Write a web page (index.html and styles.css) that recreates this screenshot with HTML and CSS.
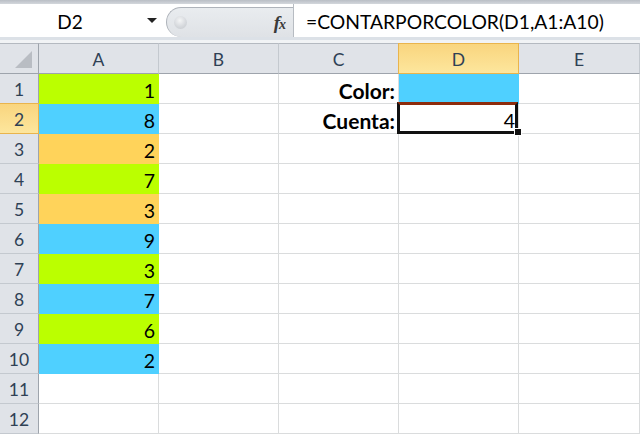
FILE: index.html
```html
<!DOCTYPE html>
<html>
<head>
<meta charset="utf-8">
<link rel="stylesheet" href="styles.css">
</head>
<body>
<div class="app">
  <div class="topstrip"></div>
  <div class="fbar">
    <div class="namebox">
      <span class="ref">D2</span>
      <span class="arrow"></span>
    </div>
    <div class="mid">
      <div class="pill">
        <span class="knob"></span>
        <span class="fx"><i>f</i><i class="x">x</i></span>
      </div>
    </div>
    <div class="formula">=CONTARPORCOLOR(D1,A1:A10)</div>
  </div>
  <div class="under"></div>
  <div class="sheet">
    <div class="hd corner"><span class="tri"></span></div>
    <div class="hd col">A</div>
    <div class="hd col">B</div>
    <div class="hd col">C</div>
    <div class="hd col sel">D</div>
    <div class="hd col">E</div>

    <div class="hd row">1</div>
    <div class="c lime">1</div><div class="c"></div><div class="c b">Color:</div><div class="c blue"></div><div class="c"></div>

    <div class="hd row sel">2</div>
    <div class="c blue">8</div><div class="c"></div><div class="c b">Cuenta:</div><div class="c active">4<span class="selbox"></span><span class="handle"></span></div><div class="c"></div>

    <div class="hd row">3</div>
    <div class="c orange">2</div><div class="c"></div><div class="c"></div><div class="c"></div><div class="c"></div>

    <div class="hd row">4</div>
    <div class="c lime">7</div><div class="c"></div><div class="c"></div><div class="c"></div><div class="c"></div>

    <div class="hd row">5</div>
    <div class="c orange">3</div><div class="c"></div><div class="c"></div><div class="c"></div><div class="c"></div>

    <div class="hd row">6</div>
    <div class="c blue">9</div><div class="c"></div><div class="c"></div><div class="c"></div><div class="c"></div>

    <div class="hd row">7</div>
    <div class="c lime">3</div><div class="c"></div><div class="c"></div><div class="c"></div><div class="c"></div>

    <div class="hd row">8</div>
    <div class="c blue">7</div><div class="c"></div><div class="c"></div><div class="c"></div><div class="c"></div>

    <div class="hd row">9</div>
    <div class="c lime">6</div><div class="c"></div><div class="c"></div><div class="c"></div><div class="c"></div>

    <div class="hd row">10</div>
    <div class="c blue">2</div><div class="c"></div><div class="c"></div><div class="c"></div><div class="c"></div>

    <div class="hd row">11</div>
    <div class="c"></div><div class="c"></div><div class="c"></div><div class="c"></div><div class="c"></div>

    <div class="hd row">12</div>
    <div class="c"></div><div class="c"></div><div class="c"></div><div class="c"></div><div class="c"></div>
  </div>
</div>
</body>
</html>
```

FILE: styles.css
```css
* { box-sizing: border-box; }
html, body { margin: 0; padding: 0; background: #fff; }
body { width: 640px; height: 436px; overflow: hidden; font-family: Lato, "Liberation Sans", sans-serif; }

.app { display: flex; flex-direction: column; }

.topstrip {
  height: 4px;
  background: linear-gradient(#b9bec5, #d3d7dc);
}

.fbar {
  height: 33px;
  display: flex;
  background: #fff;
}

.namebox {
  width: 166px;
  display: flex;
  align-items: center;
  background: #fff;
}
.ref {
  width: 140px;
  text-align: center;
  font-size: 19px;
  color: #000;
  padding-top: 1px;
}
.arrow {
  width: 0; height: 0;
  margin-left: 7px;
  border-left: 5px solid transparent;
  border-right: 5px solid transparent;
  border-top: 5px solid #222;
}

.mid {
  width: 127px;
  background: #fff;
  padding-top: 3px;
}
.pill {
  height: 100%;
  display: flex;
  align-items: center;
  background: linear-gradient(#e9ecef, #dfe2e6);
  border: 1px solid #aeb3ba;
  border-right: none;
  border-bottom: none;
  border-radius: 15px 0 0 15px;
  padding-left: 7px;
}
.knob {
  width: 13px; height: 13px;
  border-radius: 50%;
  background: radial-gradient(circle at 45% 35%, #f4f5f6 0%, #d6d9dd 55%, #c2c6cb 100%);
}
.fx {
  margin-left: auto;
  margin-right: 8px;
  font-family: "Liberation Serif", serif;
  font-weight: bold;
  font-size: 19px;
  color: #3a3a3a;
  letter-spacing: -1px;
}
.fx .x { font-size: 14px; }

.formula {
  flex: 1;
  border-left: 1px solid #b7bcc2;
  padding-left: 12px;
  display: flex;
  align-items: center;
  font-size: 19.3px;
  color: #000;
  white-space: nowrap;
  padding-top: 1px;
}

.under {
  height: 6px;
  background: linear-gradient(#dce1e7 0, #dce1e7 3px, #f1f3f5 3px, #f1f3f5 6px);
}

.sheet {
  display: grid;
  grid-template-columns: 39px 120px 120px 120px 120px 1fr;
  grid-template-rows: 31px repeat(12, 30px);
}

.sheet > div {
  border-right: 1px solid #dadcdd;
  border-bottom: 1px solid #dadcdd;
  display: flex;
  align-items: center;
}

.hd {
  background: #e0e3e8;
  color: #2f4155;
  font-size: 17.5px;
  justify-content: center;
  padding-top: 2px;
}
.hd.col {
  border-top: 1px solid #b4b9c0;
  border-right: 1px solid #c4c9cf;
  border-bottom: 1px solid #9ea4ac;
}
.hd.corner {
  border-top: 1px solid #b4b9c0;
  border-right: 1px solid #9ea4ac;
  border-bottom: 1px solid #9ea4ac;
  justify-content: flex-end;
  align-items: flex-end;
  padding: 0 6px 5px 0;
}
.tri {
  width: 17px; height: 17px;
  background: #b9bdc3;
  clip-path: polygon(100% 0, 100% 100%, 0 100%);
}
.hd.row {
  border-right: 1px solid #9ea4ac;
  border-bottom: 1px solid #c4c9cf;
}
.hd.sel {
  background: linear-gradient(#f9d57e, #fde69d);
  border-color: #e9b44c;
  border-left: 1px solid #e9b44c;
  margin-left: -1px;
}
.hd.row.sel {
  margin-left: 0;
  border-left: none;
  border-top: 1px solid #e9b44c;
  margin-top: -1px;
}

.c {
  font-size: 19.5px;
  color: #000;
  justify-content: flex-end;
  padding: 3px 3px 0 0;
}
.c.b { font-weight: bold; font-size: 21px; }
.lime { background: #bbff00; border-color: transparent !important; }
.blue { background: #4fd0ff; border-color: transparent !important; }
.orange { background: #ffd35a; border-color: transparent !important; }

.active { position: relative; }
.selbox {
  position: absolute;
  left: -2px; top: -2px; right: 0; bottom: -1px;
  border: 3px solid #111;
  border-top-color: #8e2c0c;
}
.handle {
  position: absolute;
  right: -4px; bottom: -3px;
  width: 8px; height: 8px;
  background: #111;
  border: 1px solid #fff;
}
```
